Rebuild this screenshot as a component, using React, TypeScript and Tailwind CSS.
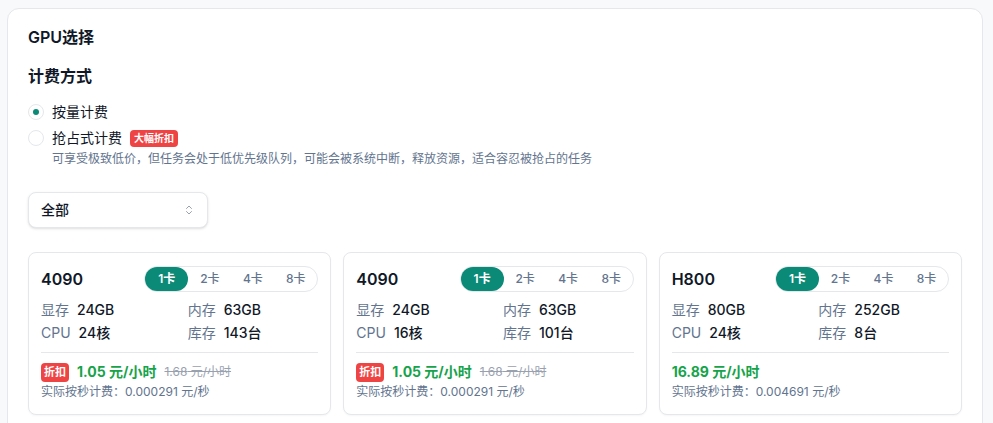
import { ChevronsUpDown } from "lucide-react";

const gpus = [
  { name: "4090", vram: "24GB", ram: "63GB", cpu: "24核", stock: "143台", price: "1.05", orig: "1.68", perSec: "0.000291", discount: true },
  { name: "4090", vram: "24GB", ram: "63GB", cpu: "16核", stock: "101台", price: "1.05", orig: "1.68", perSec: "0.000291", discount: true },
  { name: "H800", vram: "80GB", ram: "252GB", cpu: "24核", stock: "8台", price: "16.89", orig: "", perSec: "0.004691", discount: false },
];

function Spec({ label, value }: { label: string; value: string }) {
  return (
    <div className="flex items-center gap-2 text-sm leading-5">
      <span className="text-slate-500">{label}</span>
      <span className="font-medium text-gray-900">{value}</span>
    </div>
  );
}

function GpuCard({ gpu }: { gpu: (typeof gpus)[number] }) {
  return (
    <div className="rounded-lg border border-gray-200 bg-white px-3 pt-[13px] pb-[14px] shadow-[0_1px_2px_rgba(15,23,42,0.04)]">
      <div className="mb-2 flex items-center justify-between">
        <span className="text-base font-semibold text-gray-900">{gpu.name}</span>
        <div className="flex rounded-full border border-gray-200">
          {["1卡", "2卡", "4卡", "8卡"].map((c, i) => (
            <span
              key={c}
              className={
                i === 0
                  ? "flex h-6 w-[43px] items-center justify-center rounded-full bg-[#0b8a78] text-xs font-semibold text-white"
                  : "flex h-6 w-[43px] items-center justify-center text-xs font-medium text-slate-500"
              }
            >
              {c}
            </span>
          ))}
        </div>
      </div>
      <div className="grid grid-cols-2 gap-x-4 gap-y-[3px]">
        <Spec label="显存" value={gpu.vram} />
        <Spec label="内存" value={gpu.ram} />
        <Spec label="CPU" value={gpu.cpu} />
        <Spec label="库存" value={gpu.stock} />
      </div>
      <div className="mt-[9px] border-t border-gray-200 pt-[9px]">
        <div className="flex h-5 items-center gap-2">
          {gpu.discount && (
            <span className="flex h-[19px] items-center rounded bg-[#ef4444] px-[3px] text-[11px] font-bold text-white">折扣</span>
          )}
          <span className="text-sm font-bold text-[#16a34a]">{gpu.price} 元/小时</span>
          {gpu.orig && <span className="text-xs text-gray-400 line-through">{gpu.orig} 元/小时</span>}
        </div>
        <div className="mt-0.5 text-xs leading-4 text-slate-500">实际按秒计费：{gpu.perSec} 元/秒</div>
      </div>
    </div>
  );
}

export default function App() {
  return (
    <div className="min-h-screen bg-[#f8f9fa] pt-2 pr-[10px] pl-[7px] font-['Inter','Noto_Sans_CJK_SC',sans-serif]">
      <div className="rounded-xl border border-gray-200 bg-white px-5 pt-4 pb-8">
        <h2 className="text-base leading-6 font-semibold text-gray-900">GPU选择</h2>

        <h3 className="mt-[15px] text-base leading-6 font-semibold text-gray-900">计费方式</h3>

        <div className="mt-3.5 flex flex-col gap-1.5">
          <label className="flex items-center gap-2 text-sm leading-5 text-gray-900">
            <span className="flex h-4 w-4 items-center justify-center rounded-full border border-gray-200 bg-white">
              <span className="h-1.5 w-1.5 rounded-full bg-[#0b8a78]" />
            </span>
            按量计费
          </label>
          <div>
            <label className="flex items-center gap-2 text-sm leading-5 text-gray-900">
              <span className="h-4 w-4 rounded-full border border-gray-200 bg-white" />
              抢占式计费
              <span className="flex h-[17px] items-center rounded bg-[#ef4444] px-1 text-[10px] font-bold text-white">大幅折扣</span>
            </label>
            <p className="mt-[3px] pl-6 text-xs leading-4 text-slate-500">
              可享受极致低价，但任务会处于低优先级队列，可能会被系统中断，释放资源，适合容忍被抢占的任务
            </p>
          </div>
        </div>

        <button className="mt-[25px] flex h-9 w-[180px] items-center justify-between rounded-lg border border-gray-200 bg-white px-3 text-sm font-medium text-gray-900 shadow-sm">
          全部
          <ChevronsUpDown size={12} className="text-gray-400" />
        </button>

        <div className="mt-6 grid grid-cols-3 gap-3">
          {gpus.map((g, i) => (
            <GpuCard key={i} gpu={g} />
          ))}
        </div>
      </div>
    </div>
  );
}
